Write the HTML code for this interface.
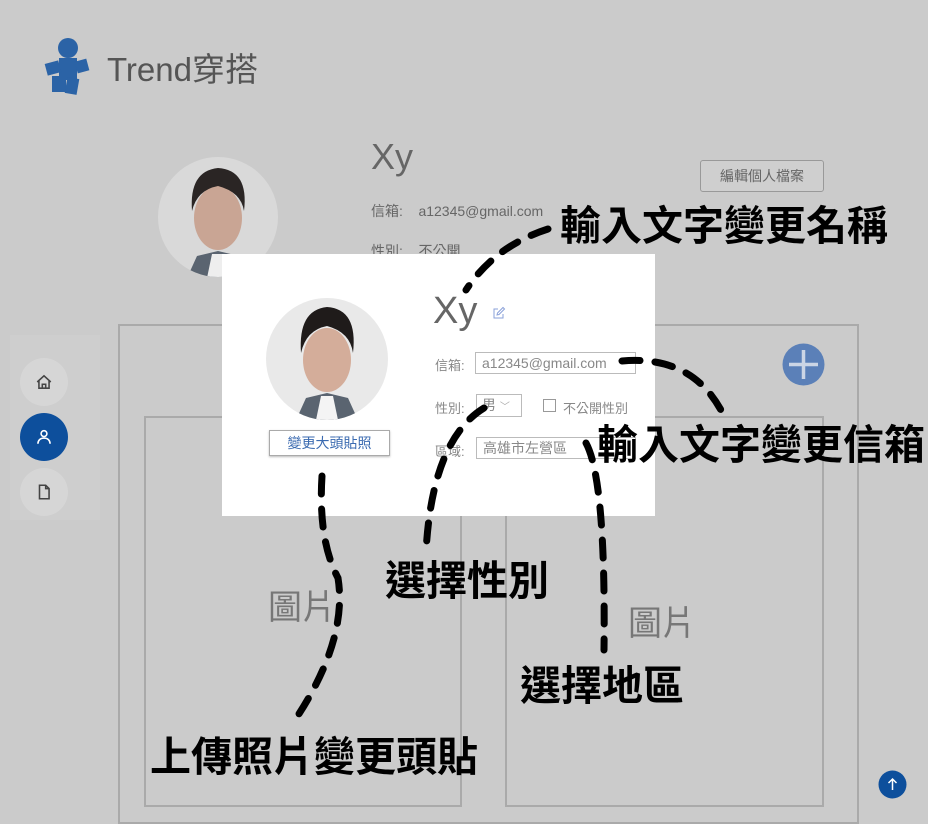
<!DOCTYPE html>
<html><head><meta charset="utf-8">
<style>
*{margin:0;padding:0;box-sizing:border-box}
body{width:928px;height:810px;overflow:hidden;background:#cbcbcb;font-family:"Liberation Sans","Noto Sans CJK TC",sans-serif;position:relative}
.a{position:absolute}
.ann{position:absolute;font-family:"Liberation Sans","Noto Sans CJK TC",sans-serif;font-weight:bold;color:#000;font-size:41px;white-space:nowrap;line-height:1}
.nav{position:absolute;left:20px;width:48px;height:48px;border-radius:50%;background:#d6d6d6;display:flex;align-items:center;justify-content:center}
.lbl{position:absolute;font-size:13px;color:#888}
.inp{position:absolute;border:1px solid #bbb;background:#fff;font-size:14px;color:#888;padding-left:6px;line-height:20px}
</style></head><body>
<svg class="a" style="left:42px;top:36px" width="56" height="60" viewBox="0 0 56 60">
<circle cx="26" cy="12" r="10" fill="#2b63a6"/>
<rect x="17" y="22" width="18" height="22" fill="#2b63a6"/>
<rect x="4" y="26" width="14" height="12" fill="#2b63a6" transform="rotate(-15 11 32)"/>
<rect x="34" y="24" width="12" height="12" fill="#2b63a6" transform="rotate(-15 40 30)"/>
<rect x="10" y="40" width="14" height="16" fill="#2b63a6"/>
<rect x="24" y="42" width="12" height="16" fill="#2b63a6" transform="rotate(10 30 50)"/>
</svg>
<div class="a" style="left:107px;top:50px;font-size:33px;color:#555;line-height:40px">Trend穿搭</div>

<svg class="a" style="left:157px;top:156px" width="122" height="122" viewBox="0 0 122 122">
<defs><clipPath id="c1"><circle cx="61" cy="61" r="60"/></clipPath></defs>
<g clip-path="url(#c1)"><rect width="122" height="122" fill="#d9d9d9"/>
<path d="M30 122 L40 100 L61 95 L82 100 L92 122Z" fill="#5a6470"/>
<path d="M50 122 L55 98 L67 98 L72 122Z" fill="#eee"/>
<ellipse cx="61" cy="62" rx="24" ry="32" fill="#c9a594"/>
<path d="M35 55 Q32 15 61 12 Q92 14 87 55 Q84 36 61 30 Q40 34 35 55Z" fill="#2a2524"/></g>
</svg>
<div class="a" style="left:371px;top:137px;font-size:36px;line-height:40px;color:#666">Xy</div>
<div class="a" style="left:371px;top:201px;font-size:14px;color:#666">信箱:&nbsp;&nbsp;&nbsp;&nbsp;a12345@gmail.com</div>
<div class="a" style="left:371px;top:241px;font-size:14px;color:#666">性別:&nbsp;&nbsp;&nbsp;&nbsp;不公開</div>
<div class="a" style="left:700px;top:160px;width:124px;height:32px;border:1px solid #999;border-radius:3px;font-size:14px;color:#666;text-align:center;line-height:30px;background:#cfcfcf">編輯個人檔案</div>

<div class="a" style="left:10px;top:335px;width:90px;height:185px;background:#cecece"></div>
<div class="nav" style="top:358px"><svg width="18" height="18" viewBox="0 0 16 16" fill="none" stroke="#444" stroke-width="1.4"><path d="M2 8 L8 2.5 L14 8 M3.5 7 V13.5 H12.5 V7 M6.5 13.5 V10 H9.5 V13.5"/></svg></div>
<div class="nav" style="top:413px;background:#0d4f9c"><svg width="18" height="18" viewBox="0 0 16 16" fill="none" stroke="#fff" stroke-width="1.4"><circle cx="8" cy="5" r="2.6"/><path d="M2.5 14 Q3 9 8 9 Q13 9 13.5 14"/></svg></div>
<div class="nav" style="top:468px"><svg width="18" height="18" viewBox="0 0 16 16" fill="none" stroke="#444" stroke-width="1.4"><path d="M4 2 H9.5 L12.5 5 V14 H4 Z M9.5 2 V5 H12.5"/></svg></div>

<div class="a" style="left:118px;top:324px;width:741px;height:500px;border:2px solid #aaa"></div>
<div class="a" style="left:144px;top:416px;width:318px;height:391px;border:2px solid #aaa"></div>
<div class="a" style="left:505px;top:416px;width:319px;height:391px;border:2px solid #aaa"></div>
<div class="a" style="left:268px;top:580px;font-size:34px;color:#777">圖片</div>
<div class="a" style="left:628px;top:596px;font-size:34px;color:#777">圖片</div>
<svg class="a" style="left:782px;top:343px" width="43" height="43"><circle cx="21.5" cy="21.5" r="21" fill="#5b80b8"/><path d="M21.5 7 V36 M7 21.5 H36" stroke="#cbd5e5" stroke-width="3.5"/></svg>
<svg class="a" style="left:878px;top:770px" width="29" height="29"><circle cx="14.5" cy="14.5" r="14" fill="#0d4f9c"/><path d="M14.5 20 V9 M10.5 13 L14.5 9 L18.5 13" stroke="#fff" stroke-width="1.5" fill="none"/></svg>

<div class="a" style="left:222px;top:254px;width:433px;height:262px;background:#fff"></div>
<svg class="a" style="left:266px;top:298px" width="122" height="122" viewBox="0 0 122 122">
<defs><clipPath id="c2"><circle cx="61" cy="61" r="61"/></clipPath></defs>
<g clip-path="url(#c2)"><rect width="122" height="122" fill="#e9e9e9"/>
<path d="M30 122 L40 100 L61 95 L82 100 L92 122Z" fill="#5a6470"/>
<path d="M50 122 L55 98 L67 98 L72 122Z" fill="#f4f4f4"/>
<ellipse cx="61" cy="62" rx="24" ry="32" fill="#d4ad9a"/>
<path d="M35 55 Q32 12 61 9 Q92 11 87 55 Q84 34 61 28 Q40 32 35 55Z" fill="#1f1b1a"/></g>
</svg>
<div class="a" style="left:269px;top:430px;width:121px;height:26px;border:1px solid #aaa;box-shadow:0 1px 2px #bbb;font-size:14px;color:#3a6ab0;text-align:center;line-height:24px">變更大頭貼照</div>
<div class="a" style="left:433px;top:290px;font-size:38px;line-height:42px;color:#666">Xy</div>
<svg class="a" style="left:492px;top:306px" width="14" height="14" viewBox="0 0 14 14" fill="none" stroke="#8aa0d8" stroke-width="1"><path d="M11 8 V12 H2 V3 H6"/><path d="M5 9 L5.5 7 L11 1.5 L12.5 3 L7 8.5 Z"/></svg>
<div class="lbl" style="left:435px;top:355px">信箱:</div>
<div class="inp" style="left:475px;top:352px;width:161px;height:22px">a12345@gmail.com</div>
<div class="lbl" style="left:435px;top:398px">性別:</div>
<div class="inp" style="left:476px;top:394px;width:46px;height:23px;padding-left:5px">男 <span style="font-size:10px;color:#aaa">﹀</span></div>
<div class="a" style="left:543px;top:399px;width:13px;height:13px;border:1px solid #999"></div>
<div class="lbl" style="left:563px;top:398px">不公開性別</div>
<div class="lbl" style="left:435px;top:441px">區域:</div>
<div class="inp" style="left:476px;top:437px;width:160px;height:22px">高雄市左營區</div>

<svg class="a" style="left:0;top:0" width="928" height="810" fill="none" stroke="#000" stroke-width="7" stroke-linecap="round" stroke-dasharray="18 15">
<path d="M548 229 Q495 246 466 290"/>
<path d="M622 361 Q692 355 722 412"/>
<path d="M484 408 Q432 440 426 552"/>
<path d="M586 443 Q606 480 604 650"/>
<path d="M322 476 Q318 540 338 578 Q348 640 295 720"/>
</svg>
<div class="ann" style="left:560px;top:206px">輸入文字變更名稱</div>
<div class="ann" style="left:597px;top:425px">輸入文字變更信箱</div>
<div class="ann" style="left:385px;top:561px">選擇性別</div>
<div class="ann" style="left:520px;top:666px">選擇地區</div>
<div class="ann" style="left:150px;top:737px">上傳照片變更頭貼</div>
</body></html>
